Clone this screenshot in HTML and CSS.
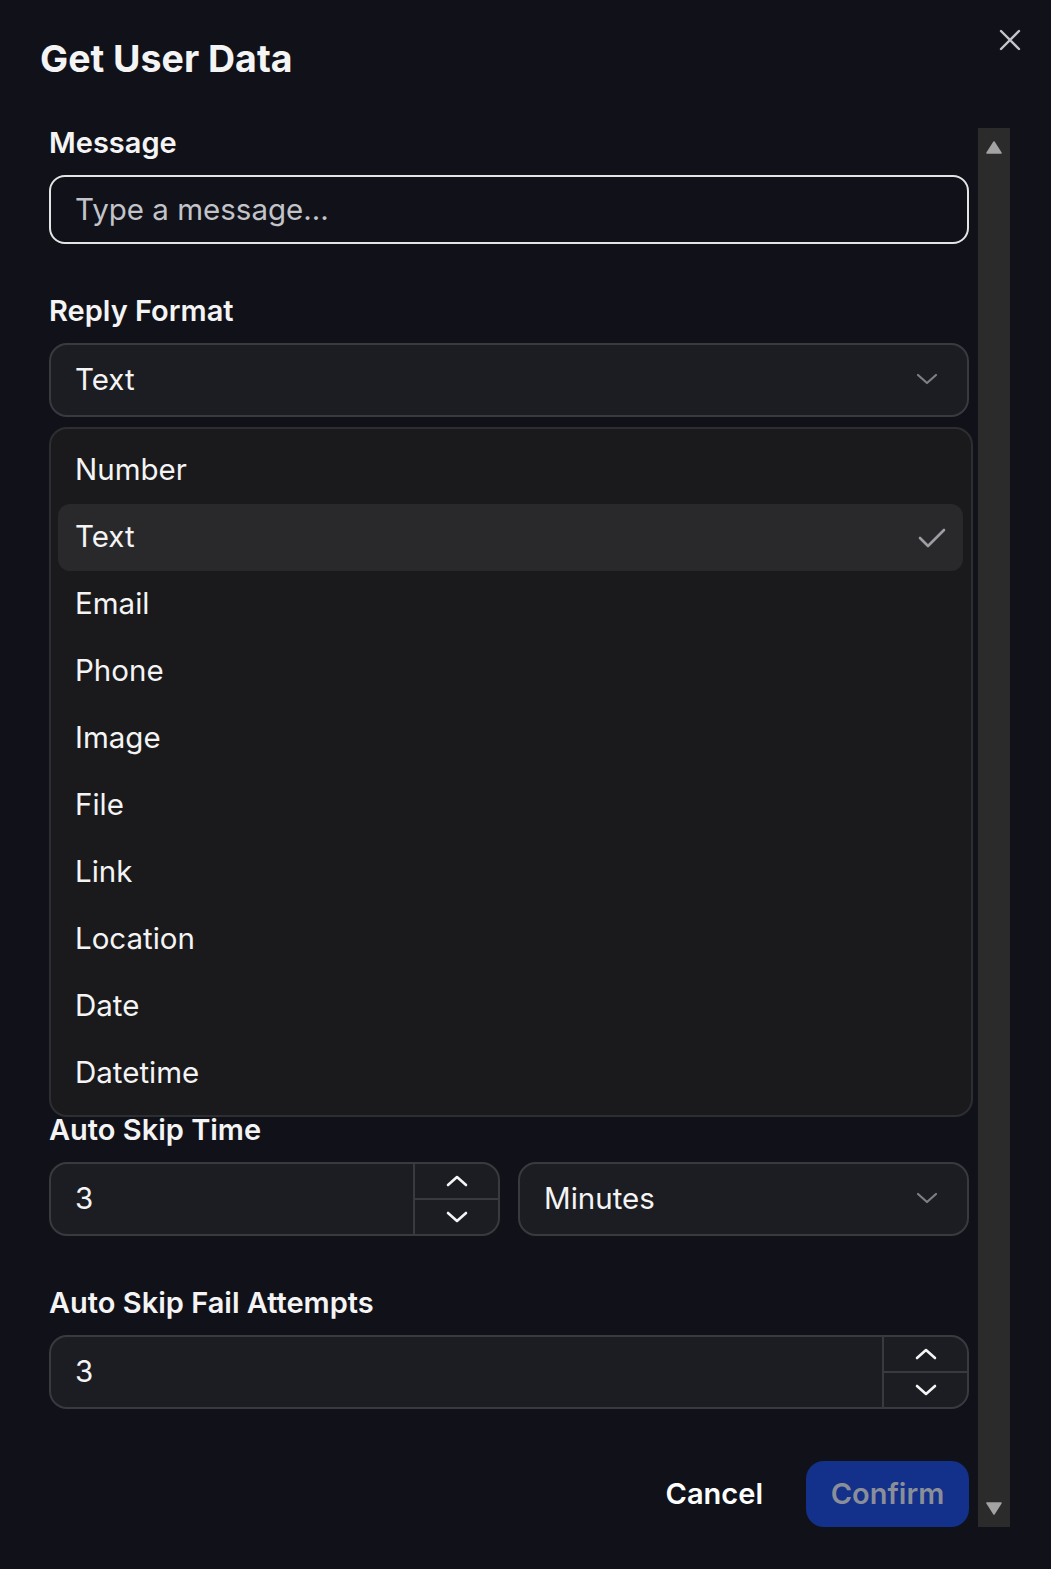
FILE: index.html
```html
<!DOCTYPE html>
<html>
  <head>
    <meta charset="utf-8">
    <meta name="viewport" content="width=device-width, initial-scale=1">
    <title>Get User Data</title>
    <link rel="stylesheet" href="styles.css">
  </head>

  <body>
  <div class="dialog">
    <div class="dialog-head">
      <h2 class="dialog-title">Get User Data</h2>
      <button class="close-btn" aria-label="Close">
        <svg width="22" height="22" viewBox="0 0 22 22"><path d="M2 2L20 20M20 2L2 20" /></svg>
      </button>
    </div>

    <div class="dialog-body">
      <div class="form">
        <div class="field">
          <label class="field-label">Message</label>
          <input type="text" class="text-input" placeholder="Type a message...">
        </div>

        <div class="field">
          <label class="field-label">Reply Format</label>
          <div class="select-wrap">
            <div class="select">
              <span>Text</span>
              <svg class="chev" width="22" height="12" viewBox="0 0 22 12"><path d="M2 2L11 10L20 2" /></svg>
            </div>
            <ul class="menu">
              <li class="menu-item">Number</li>
              <li class="menu-item selected">Text
                <svg class="check" width="28" height="22" viewBox="0 0 28 22"><path d="M2 11L10 19L26 3" /></svg>
              </li>
              <li class="menu-item">Email</li>
              <li class="menu-item">Phone</li>
              <li class="menu-item">Image</li>
              <li class="menu-item">File</li>
              <li class="menu-item">Link</li>
              <li class="menu-item">Location</li>
              <li class="menu-item">Date</li>
              <li class="menu-item">Datetime</li>
            </ul>
          </div>
        </div>

        <div class="field under-menu">
          <label class="field-label">Auto Skip Time</label>
          <div class="row">
            <div class="number-input">
              <span class="number-value">3</span>
              <div class="spinner">
                <button class="spin-btn"><svg width="22" height="12" viewBox="0 0 22 12"><path d="M2 10L11 2L20 10" /></svg></button>
                <button class="spin-btn"><svg width="22" height="12" viewBox="0 0 22 12"><path d="M2 2L11 10L20 2" /></svg></button>
              </div>
            </div>
            <div class="select">
              <span>Minutes</span>
              <svg class="chev" width="22" height="12" viewBox="0 0 22 12"><path d="M2 2L11 10L20 2" /></svg>
            </div>
          </div>
        </div>

        <div class="field">
          <label class="field-label">Auto Skip Fail Attempts</label>
          <div class="number-input">
            <span class="number-value">3</span>
            <div class="spinner">
              <button class="spin-btn"><svg width="22" height="12" viewBox="0 0 22 12"><path d="M2 10L11 2L20 10" /></svg></button>
              <button class="spin-btn"><svg width="22" height="12" viewBox="0 0 22 12"><path d="M2 2L11 10L20 2" /></svg></button>
            </div>
          </div>
        </div>

        <div class="actions">
          <button class="btn-cancel">Cancel</button>
          <button class="btn-confirm">Confirm</button>
        </div>
      </div>

      <div class="scrollbar">
        <svg width="16" height="13" viewBox="0 0 16 13"><path d="M8 1L15 12H1Z" /></svg>
        <svg width="16" height="13" viewBox="0 0 16 13"><path d="M1 1H15L8 12Z" /></svg>
      </div>
    </div>
  </div>
 </body>
</html>
```

FILE: styles.css
```css
body {
  margin: 0;
  background-color: #111219;
  color: #f4f4f5;
  font-family: Inter, "Noto Sans", sans-serif;
}
.dialog {
  position: relative;
  width: 1051px;
  height: 1569px;
}
.dialog-head {
  padding: 36px 40px 0;
}
.dialog-title {
  margin: 0;
  font-size: 37.5px;
  line-height: 46px;
  font-weight: 700;
}
.close-btn {
  position: absolute;
  top: 29px;
  right: 30px;
  padding: 0;
  border: none;
  background: none;
  cursor: pointer;
}
.close-btn path {
  stroke: #c4c5ca;
  stroke-width: 2.4;
  stroke-linecap: round;
  fill: none;
}
.dialog-body {
  display: flex;
  gap: 9px;
  margin-top: 46px;
  padding-left: 49px;
}
.form {
  width: 920px;
  display: flex;
  flex-direction: column;
  gap: 52px;
}
.field {
  display: flex;
  flex-direction: column;
  gap: 17px;
}
.field-label {
  font-size: 29px;
  line-height: 30px;
  font-weight: 600;
}
.text-input {
  height: 69px;
  box-sizing: border-box;
  padding: 0 24px 2px;
  border: 2px solid #e4e4e7;
  border-radius: 16px;
  background: transparent;
  color: #f4f4f5;
  font-family: inherit;
  font-size: 29.5px;
  outline: none;
}
.text-input::placeholder {
  color: #c3c4c9;
}
.select-wrap {
  position: relative;
}
.select {
  height: 74px;
  box-sizing: border-box;
  display: flex;
  align-items: center;
  justify-content: space-between;
  padding: 0 29px 2px 24px;
  border: 2px solid #393a3f;
  border-radius: 18px;
  background-color: #1c1d22;
  font-size: 29.5px;
}
.chev path {
  stroke: #7e7f85;
  stroke-width: 2.2;
  stroke-linecap: round;
  stroke-linejoin: round;
  fill: none;
}
.menu {
  position: absolute;
  top: calc(100% + 10px);
  left: 0;
  width: 924px;
  box-sizing: border-box;
  margin: 0;
  padding: 8px 8px 8px 7px;
  list-style: none;
  border: 2px solid #2d2e32;
  border-radius: 18px;
  background-color: #1a1a1c;
  z-index: 2;
}
.menu-item {
  height: 67px;
  box-sizing: border-box;
  display: flex;
  align-items: center;
  justify-content: space-between;
  padding: 0 17px 3px;
  border-radius: 12px;
  font-size: 29.5px;
  color: #f4f4f5;
}
.menu-item.selected {
  background-color: #29292c;
}
.check {
  margin-top: 3px;
}
.check path {
  stroke: #9d9ea3;
  stroke-width: 2.6;
  stroke-linecap: round;
  stroke-linejoin: round;
  fill: none;
}
.under-menu {
  margin-top: 646px;
}
.row {
  display: grid;
  grid-template-columns: 1fr 1fr;
  gap: 18px;
}
.number-input {
  height: 74px;
  box-sizing: border-box;
  display: flex;
  border: 2px solid #393a3f;
  border-radius: 18px;
  background-color: #1c1d22;
  overflow: hidden;
}
.number-value {
  flex: 1;
  display: flex;
  align-items: center;
  padding: 0 0 2px 24px;
  font-size: 29.5px;
}
.spinner {
  width: 85px;
  box-sizing: border-box;
  display: flex;
  flex-direction: column;
  border-left: 2px solid #393a3f;
}
.spin-btn {
  flex: 1;
  display: flex;
  align-items: center;
  justify-content: center;
  padding: 0;
  border: none;
  background: none;
}
.spin-btn + .spin-btn {
  border-top: 2px solid #393a3f;
}
.spin-btn path {
  stroke: #f4f4f5;
  stroke-width: 2.6;
  stroke-linecap: round;
  stroke-linejoin: round;
  fill: none;
}
.actions {
  display: flex;
  justify-content: flex-end;
  align-items: center;
  gap: 19px;
}
.btn-cancel,
.btn-confirm {
  height: 66px;
  border: none;
  border-radius: 18px;
  font-family: inherit;
  font-size: 29px;
  font-weight: 600;
  padding-bottom: 2px;
  cursor: pointer;
}
.btn-cancel {
  padding-left: 24px;
  padding-right: 24px;
  background: none;
  color: #ffffff;
}
.btn-confirm {
  width: 163px;
  background-color: #13308a;
  color: #8a8e99;
}
.scrollbar {
  width: 32px;
  height: 1399px;
  display: flex;
  flex-direction: column;
  justify-content: space-between;
  align-items: center;
  padding: 13px 0 12px;
  box-sizing: border-box;
  background-color: #2b2b2b;
}
.scrollbar path {
  fill: #a3a3a3;
  stroke: #a3a3a3;
  stroke-width: 1.5;
  stroke-linejoin: round;
}
```
